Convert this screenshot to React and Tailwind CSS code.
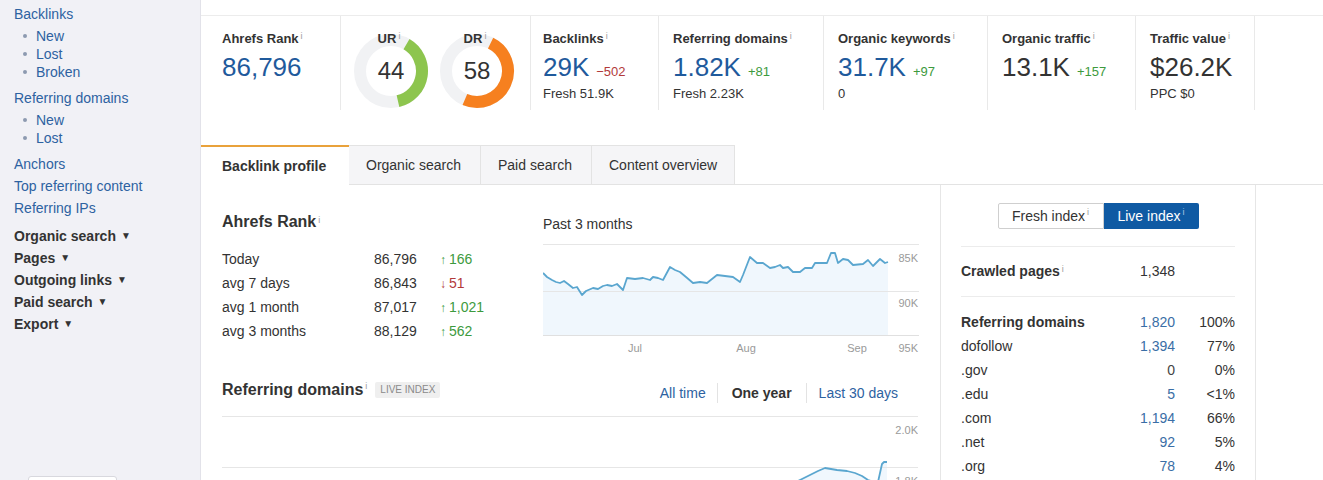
import React from 'react';

const blue = 'text-[#1f5a9c]';
const link = 'text-[#2d62a1]';

const Info = () => (
  <sup className="ml-[2px] text-[9px] font-normal text-[#9a9a9a]">i</sup>
);

const SideLink = ({ children }) => (
  <div className={`leading-[22px] ${link}`}>{children}</div>
);

const SubList = ({ items }) => (
  <ul className="mt-[2px] mb-[6px]">
    {items.map((t) => (
      <li key={t} className={`flex items-center pl-[9px] leading-[18px] ${link}`}>
        <span className="mr-[9px] h-[4px] w-[4px] rounded-full bg-[#8d9ab0]" />
        {t}
      </li>
    ))}
  </ul>
);

const Menu = ({ children }) => (
  <div className="flex items-center gap-[5px] font-bold leading-[22px] text-[#333]">
    {children}
    <span className="text-[10px]">▼</span>
  </div>
);

const Sidebar = () => (
  <aside className="h-full w-[201px] shrink-0 overflow-hidden border-r border-[#e2e2e9] bg-[#f1f1f6] pl-[14px] pt-[3px] text-[14px]">
    <SideLink>Backlinks</SideLink>
    <SubList items={['New', 'Lost', 'Broken']} />
    <SideLink>Referring domains</SideLink>
    <SubList items={['New', 'Lost']} />
    <SideLink>Anchors</SideLink>
    <SideLink>Top referring content</SideLink>
    <SideLink>Referring IPs</SideLink>
    <div className="h-[6px]" />
    <Menu>Organic search</Menu>
    <Menu>Pages</Menu>
    <Menu>Outgoing links</Menu>
    <Menu>Paid search</Menu>
    <Menu>Export</Menu>
    <div className="ml-[14px] mt-[141px] h-[30px] w-[89px] rounded-[3px] border border-[#d8d8de] bg-white" />
  </aside>
);

const Metric = ({ w, pl, title, value, valueColor = blue, delta, deltaColor, sub }) => (
  <div className={`h-full shrink-0 border-r border-[#e9e9e9] pt-[15px] ${w} ${pl}`}>
    <div className="text-[13px] font-bold leading-[16px] text-[#333]">
      {title}
      <Info />
    </div>
    <div className="mt-[5px] flex items-baseline gap-[7px]">
      <span className={`text-[26px] leading-[30px] ${valueColor}`}>{value}</span>
      {delta && <span className={`text-[13px] ${deltaColor}`}>{delta}</span>}
    </div>
    {sub && <div className="mt-[4px] text-[13px] leading-[16px] text-[#333]">{sub}</div>}
  </div>
);

const arcPoint = (deg, r = 31, c = 38) => {
  const a = (deg * Math.PI) / 180;
  return [c + r * Math.sin(a), c - r * Math.cos(a)];
};

const Donut = ({ label, value, from, to, color }) => {
  const [x1, y1] = arcPoint(from);
  const [x2, y2] = arcPoint(to);
  const large = to - from > 180 ? 1 : 0;
  return (
    <div className="relative h-[76px] w-[76px]">
      <svg width="76" height="76" viewBox="0 0 76 76">
        <circle cx="38" cy="38" r="31" fill="none" stroke="#f1f2f4" strokeWidth="12" />
        <path
          d={`M ${x1} ${y1} A 31 31 0 ${large} 1 ${x2} ${y2}`}
          fill="none"
          stroke={color}
          strokeWidth="12"
        />
      </svg>
      <div className="absolute left-0 right-[4px] top-[-2px] text-center text-[13px] font-bold leading-[16px] text-[#333]">
        {label}
        <Info />
      </div>
      <div className="absolute inset-0 flex items-center justify-center text-[24px] text-[#333]">
        {value}
      </div>
    </div>
  );
};

const Metrics = () => (
  <div className="flex h-[94px]">
    <Metric w="w-[140px]" pl="pl-[21px]" title="Ahrefs Rank" value="86,796" />
    <div className="flex h-full w-[190px] shrink-0 gap-[10px] border-r border-[#e9e9e9] pl-[12px] pt-[17px]">
      <Donut label="UR" value="44" from={30} to={167} color="#8dc54e" />
      <Donut label="DR" value="58" from={26} to={203} color="#f6801f" />
    </div>
    <Metric w="w-[128px]" pl="pl-[12px]" title="Backlinks" value="29K" delta="−502" deltaColor="text-[#b23a3a]" sub="Fresh 51.9K" />
    <Metric w="w-[165px]" pl="pl-[14px]" title="Referring domains" value="1.82K" delta="+81" deltaColor="text-[#3d9a3d]" sub="Fresh 2.23K" />
    <Metric w="w-[164px]" pl="pl-[14px]" title="Organic keywords" value="31.7K" delta="+97" deltaColor="text-[#3d9a3d]" sub="0" />
    <Metric w="w-[148px]" pl="pl-[14px]" title="Organic traffic" value="13.1K" valueColor="text-[#333]" delta="+157" deltaColor="text-[#3d9a3d]" />
    <Metric w="w-[119px]" pl="pl-[14px]" title="Traffic value" value="$26.2K" valueColor="text-[#333]" sub="PPC $0" />
  </div>
);

const tabs = [
  ['Organic search', 'w-[132px]'],
  ['Paid search', 'w-[111px]'],
  ['Content overview', 'w-[143px]'],
];

const Tabs = () => (
  <div className="mt-[35px] flex h-[40px] text-[14px]">
    <div className="flex w-[148px] items-center border-t-2 border-[#e9a23b] bg-white pl-[21px] font-bold text-[#333]">
      Backlink profile
    </div>
    {tabs.map(([t, w]) => (
      <div
        key={t}
        className={`flex items-center border-y border-r border-[#e3e3e3] bg-[#f5f5f7] pl-[17px] text-[#333] ${w}`}
      >
        {t}
      </div>
    ))}
    <div className="flex-1 border-b border-[#e3e3e3]" />
  </div>
);

const rankRows = [
  ['Today', '86,796', '166', true],
  ['avg 7 days', '86,843', '51', false],
  ['avg 1 month', '87,017', '1,021', true],
  ['avg 3 months', '88,129', '562', true],
];

const linePts = [
  [0, 29], [4, 33], [9, 36], [13, 38], [17, 39], [21, 37], [25, 40], [30, 44], [34, 43],
  [39, 51], [43, 47], [50, 44], [55, 45], [60, 42], [64, 41], [69, 42], [74, 40], [80, 46],
  [84, 34], [92, 35], [100, 34], [107, 36], [110, 33], [115, 34], [120, 36], [127, 23],
  [132, 26], [137, 28], [143, 33], [150, 39], [157, 38], [164, 39], [169, 35], [174, 31],
  [182, 32], [190, 33], [197, 38], [200, 31], [207, 13], [214, 19], [220, 19], [227, 24],
  [232, 23], [237, 21], [240, 24], [245, 23], [250, 28], [257, 28], [262, 24], [269, 24],
  [272, 19], [277, 19], [284, 19], [288, 9], [292, 9], [295, 19], [300, 15], [305, 16],
  [310, 21], [320, 20], [325, 16], [330, 22], [337, 15], [342, 19], [345, 18],
];

const RankChart = () => {
  const line = linePts.map(([x, y]) => `${x},${y}`).join(' ');
  const area = `M0,91 L${line.split(' ').join(' L')} L345,91 Z`;
  return (
    <svg width="376" height="116" viewBox="0 0 376 116" className="mt-[10px] block">
      <path d={area} fill="#f0f7fd" />
      <line x1="0" y1="0.5" x2="376" y2="0.5" stroke="#e6e6e6" />
      <line x1="0" y1="47.5" x2="376" y2="47.5" stroke="#e6e6e6" />
      <line x1="0" y1="91.5" x2="376" y2="91.5" stroke="#e0e0e0" />
      <polyline points={line} fill="none" stroke="#5aa6cf" strokeWidth="1.8" strokeLinejoin="round" />
      <g fontSize="11" fill="#9a9a9a" fontFamily="Liberation Sans, Arial, sans-serif">
        <text x="375" y="18" textAnchor="end">85K</text>
        <text x="375" y="63" textAnchor="end">90K</text>
        <text x="375" y="108" textAnchor="end">95K</text>
        <text x="92" y="108" textAnchor="middle">Jul</text>
        <text x="203" y="108" textAnchor="middle">Aug</text>
        <text x="314" y="108" textAnchor="middle">Sep</text>
      </g>
    </svg>
  );
};

const DomainsChart = () => {
  const pts = [[574, 66], [580, 63], [588, 59], [596, 55], [603, 52], [609, 53], [615, 54], [625, 55], [633, 57], [640, 60], [646, 64], [652, 66], [656, 66], [660, 48], [662, 46], [665, 46]];
  const line = pts.map(([x, y]) => `${x},${y}`).join(' ');
  return (
    <svg width="696" height="64" viewBox="0 0 696 64" className="block">
      <path d={`M574,66 L${line.split(' ').join(' L')} L665,66 Z`} fill="#f0f7fd" />
      <line x1="0" y1="0.5" x2="696" y2="0.5" stroke="#e6e6e6" />
      <line x1="0" y1="51.5" x2="696" y2="51.5" stroke="#e6e6e6" />
      <polyline points={line} fill="none" stroke="#5aa6cf" strokeWidth="1.8" strokeLinejoin="round" />
      <g fontSize="11" fill="#9a9a9a" fontFamily="Liberation Sans, Arial, sans-serif">
        <text x="696" y="18" textAnchor="end">2.0K</text>
        <text x="696" y="69" textAnchor="end">1.8K</text>
      </g>
    </svg>
  );
};

const LeftContent = () => (
  <div className="w-[739px] shrink-0 pl-[21px] pt-[27px] text-[14px] text-[#333]">
    <div className="flex">
      <div className="w-[321px]">
        <div className="text-[16px] font-bold leading-[20px]">
          Ahrefs Rank
          <Info />
        </div>
        <div className="mt-[15px]">
          {rankRows.map(([label, val, d, up]) => (
            <div key={label} className="flex h-[24px] items-center">
              <span className="w-[152px]">{label}</span>
              <span className="w-[66px]">{val}</span>
              <span className={up ? 'text-[#3d9a3d]' : 'text-[#b23a3a]'}>
                <span className="mr-[3px] text-[12px]">{up ? '↑' : '↓'}</span>
                {d}
              </span>
            </div>
          ))}
        </div>
      </div>
      <div className="w-[376px]">
        <div className="mt-[2px] leading-[20px]">Past 3 months</div>
        <RankChart />
      </div>
    </div>
    <div className="mt-[20px] flex h-[36px] w-[696px] items-start justify-between">
      <div className="flex items-center">
        <span className="text-[16px] font-bold leading-[20px]">Referring domains</span>
        <Info />
        <span className="ml-[8px] rounded-[2px] bg-[#efefef] px-[5px] text-[10px] leading-[16px] text-[#8a8a8a]">
          LIVE INDEX
        </span>
      </div>
      <div className="mt-[3px] flex items-center pr-[20px] leading-[20px]">
        <span className={`pr-[11px] ${link}`}>All time</span>
        <span className="border-l border-[#e3e3e3] px-[14px] font-bold">One year</span>
        <span className={`border-l border-[#e3e3e3] pl-[12px] ${link}`}>Last 30 days</span>
      </div>
    </div>
    <DomainsChart />
  </div>
);

const domainRows = [
  ['dofollow', '1,394', '77%', true],
  ['.gov', '0', '0%', false],
  ['.edu', '5', '<1%', true],
  ['.com', '1,194', '66%', true],
  ['.net', '92', '5%', true],
  ['.org', '78', '4%', true],
];

const IndexPanel = () => (
  <div className="w-[316px] shrink-0 border-x border-[#e6e6e6] px-[20px] pt-[18px] text-[14px] text-[#333]">
    <div className="flex justify-center">
      <div className="flex h-[26px] w-[106px] items-center justify-center rounded-l-[2px] border border-[#cfcfcf] bg-white">
        Fresh index
        <Info />
      </div>
      <div className="flex h-[26px] w-[95px] items-center justify-center rounded-r-[2px] bg-[#0f5aa3] text-white">
        Live index
        <sup className="ml-[2px] text-[9px] text-[#a8c6e6]">i</sup>
      </div>
    </div>
    <div className="mt-[17px] flex h-[51px] items-center border-y border-[#ececec]">
      <span className="flex-1 font-bold">
        Crawled pages
        <Info />
      </span>
      <span className="w-[80px] text-right">1,348</span>
      <span className="w-[60px]" />
    </div>
    <div className="pt-[13px]">
      <div className="flex h-[24px] items-center">
        <span className="flex-1 font-bold">Referring domains</span>
        <span className="w-[80px] text-right text-[#3a6ea6]">1,820</span>
        <span className="w-[60px] text-right">100%</span>
      </div>
      {domainRows.map(([label, n, p, isLink]) => (
        <div key={label} className="flex h-[24px] items-center">
          <span className="flex-1">{label}</span>
          <span className={`w-[80px] text-right ${isLink ? 'text-[#3a6ea6]' : 'text-[#444]'}`}>{n}</span>
          <span className="w-[60px] text-right">{p}</span>
        </div>
      ))}
    </div>
  </div>
);

export default function App() {
  return (
    <div className="flex h-[480px] w-[1323px] overflow-hidden bg-white font-['Liberation_Sans',Arial,sans-serif] text-[14px]">
      <Sidebar />
      <main className="h-full min-w-0 flex-1">
        <div className="h-[16px] border-b border-[#ececec]" />
        <Metrics />
        <Tabs />
        <div className="flex">
          <LeftContent />
          <IndexPanel />
        </div>
      </main>
    </div>
  );
}
